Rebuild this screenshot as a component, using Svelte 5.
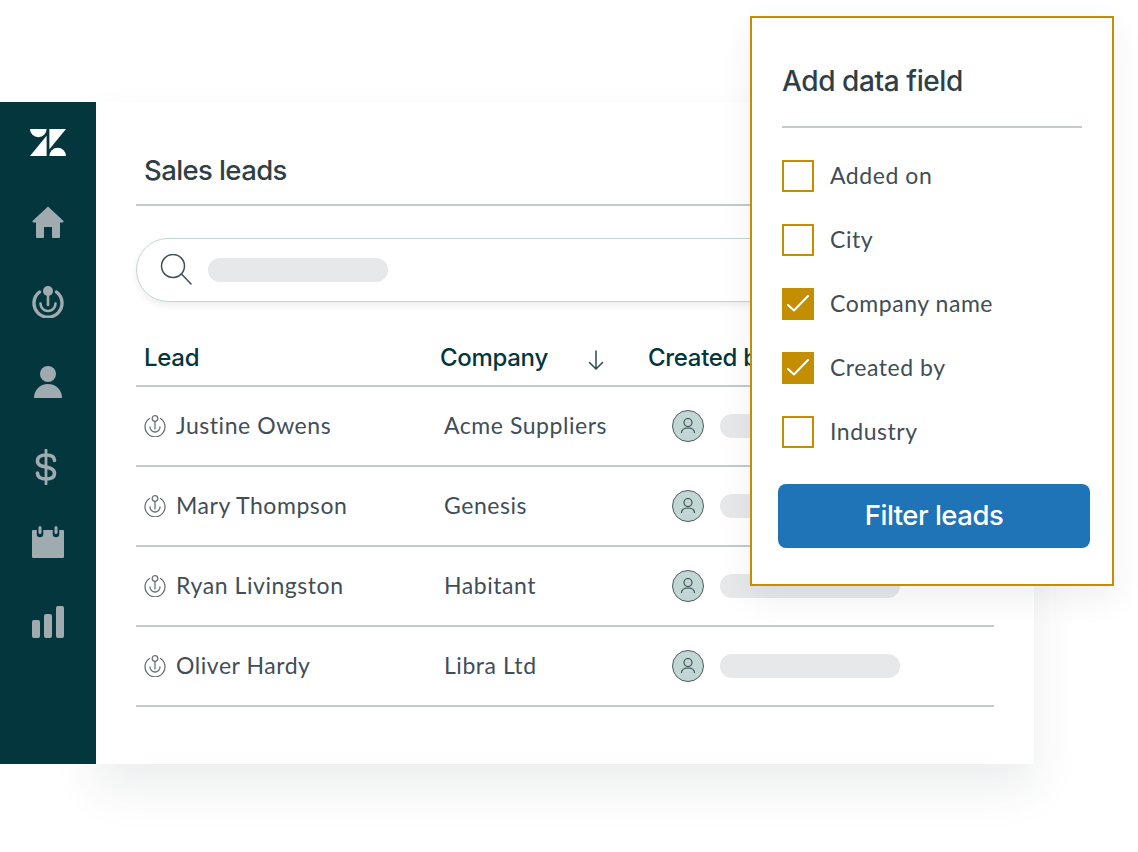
<script>
	const icons = ['logo', 'home', 'target', 'person', 'dollar', 'calendar', 'bars'];
	const leads = [
		{ name: 'Justine Owens', company: 'Acme Suppliers' },
		{ name: 'Mary Thompson', company: 'Genesis' },
		{ name: 'Ryan Livingston', company: 'Habitant' },
		{ name: 'Oliver Hardy', company: 'Libra Ltd' }
	];
	const fields = [
		{ label: 'Added on', checked: false },
		{ label: 'City', checked: false },
		{ label: 'Company name', checked: true },
		{ label: 'Created by', checked: true },
		{ label: 'Industry', checked: false }
	];
</script>

<div class="page">
	<div class="card">
		<nav class="sidebar">
			{#each icons as icon}
				<div class="nav-item">
					{#if icon === 'logo'}
						<svg width="36" height="27" viewBox="0 0 36 27" fill="#fff">
							<path d="M0 0h16.6a8.3 8.3 0 0 1-16.6 0z" />
							<path d="M16.6 6.8V27H0z" />
							<path d="M19.4 20.2V0H36z" />
							<path d="M19.4 27a8.3 8.3 0 0 1 16.6 0z" />
						</svg>
					{:else if icon === 'home'}
						<svg width="32" height="32" viewBox="0 0 32 32" fill="#a0abb0">
							<path d="M16 0.5 L31.5 15 Q32 16.5 30.5 16.5 H28 V31 Q28 32 27 32 H21 Q20 32 20 31 V21 H12 V31 Q12 32 11 32 H5 Q4 32 4 31 V16.5 H1.5 Q0 16.5 0.5 15 Z" />
						</svg>
					{:else if icon === 'target'}
						<svg width="32" height="32" viewBox="0 0 32 32" fill="none" stroke="#a0abb0" stroke-linecap="round">
							<circle cx="16" cy="5" r="5" fill="#a0abb0" stroke="none" />
							<path d="M16 8V19" stroke-width="2.6" />
							<path d="M7.500 6A14 14 0 1 0 24.500 6" stroke-width="3.400" />
							<path d="M8.500 17.500A7.500 7.500 0 0 0 23.500 17.500" stroke-width="2.600" />
						</svg>
					{:else if icon === 'person'}
						<svg width="32" height="32" viewBox="0 0 32 32" fill="#a0abb0">
							<circle cx="16" cy="8" r="8" />
							<path d="M2 32C2 24 8 18 16 18S30 24 30 32Z" />
						</svg>
					{:else if icon === 'dollar'}
						<svg class="dollar" width="24" height="36" viewBox="0 0 24 36" fill="none" stroke="#a0abb0" stroke-linecap="round">
							<path d="M12 1V35" stroke-width="2.800" />
							<path d="M20.500 11.500C20.500 7.500 17 6 12 6S3.500 8 3.500 12C3.500 16.500 7.500 17 12 18S20.500 20 20.500 24.500C20.500 28.500 17 30 12 30S3.500 28 3.500 24" stroke-width="3.600" />
						</svg>
					{:else if icon === 'calendar'}
						<svg width="32" height="32" viewBox="0 0 32 32">
							<path d="M1 4H31Q32 4 32 5V31Q32 32 31 32H1Q0 32 0 31V5Q0 4 1 4Z" fill="#a0abb0" />
							<path d="M8 1.500V8M24 1.500V8" stroke="#03363d" stroke-width="6.500" stroke-linecap="round" />
							<path d="M8 1.500V6.500M24 1.500V6.500" stroke="#a0abb0" stroke-width="3" stroke-linecap="round" />
						</svg>
					{:else}
						<svg width="32" height="32" viewBox="0 0 32 32" fill="#a0abb0">
							<rect x="0" y="14" width="8" height="18" rx="2" />
							<rect x="12" y="8" width="8" height="24" rx="2" />
							<rect x="24" y="0" width="8" height="32" rx="2" />
						</svg>
					{/if}
				</div>
			{/each}
		</nav>

		<main class="content">
			<h1>Sales leads</h1>

			<div class="search">
				<svg width="32" height="32" viewBox="0 0 32 32" fill="none" stroke="#3f4f56" stroke-width="1.500" stroke-linecap="round">
					<circle cx="13" cy="12" r="11.500" />
					<path d="M21.500 20L31 30" />
				</svg>
				<span class="bar search-bar"></span>
			</div>

			<div class="table-head">
				<span>Lead</span>
				<span class="company-head">
					Company
					<svg width="16" height="20" viewBox="0 0 16 20" fill="none" stroke="#2f4a50" stroke-width="1.500" stroke-linecap="round" stroke-linejoin="round">
						<path d="M8 1V19M1.500 12.500L8 19L14.500 12.500" />
					</svg>
				</span>
				<span>Created by</span>
			</div>

			{#each leads as lead}
				<div class="row">
					<span class="lead">
						<svg width="22" height="22" viewBox="0 0 22 22" fill="none" stroke="#66757c" stroke-width="1.300" stroke-linecap="round">
							<circle cx="11" cy="3.500" r="2.800" />
							<path d="M11 6.500V14" />
							<path d="M5.500 3.500A10 10 0 1 0 16.500 3.500" />
							<path d="M6 12A5 5 0 0 0 16 12" />
						</svg>
						<span class="label">{lead.name}</span>
					</span>
					<span class="label">{lead.company}</span>
					<span class="owner">
						<svg width="32" height="32" viewBox="0 0 32 32">
							<circle cx="16" cy="16" r="15.500" fill="#c2d6d4" stroke="#49605f" />
							<g fill="none" stroke="#2f4a50" stroke-width="1.100">
								<circle cx="16" cy="12.500" r="4" />
								<path d="M9.500 23C9.500 19.500 12.500 18 16 18S22.500 19.500 22.500 23" />
							</g>
						</svg>
						<span class="bar owner-bar"></span>
					</span>
				</div>
			{/each}
		</main>
	</div>

	<aside class="popup">
		<h2>Add data field</h2>
		<ul>
			{#each fields as field}
				<li>
					<span class="check" class:checked={field.checked}>
						{#if field.checked}
							<svg width="22" height="18" viewBox="0 0 22 18" fill="none" stroke="#fff" stroke-width="2" stroke-linecap="round" stroke-linejoin="round">
								<path d="M1 10L7 15.500L21 1" />
							</svg>
						{/if}
					</span>
					<span class="label">{field.label}</span>
				</li>
			{/each}
		</ul>
		<button>Filter leads</button>
	</aside>
</div>

<style>
	:global(body) {
		background: #fff;
	}

	.page {
		position: relative;
		width: 1138px;
		height: 852px;
		padding-top: 102px;
		box-sizing: border-box;
		overflow: hidden;
		font-family: 'Lato', sans-serif;
		color: #3f4e58;
	}

	.card {
		display: flex;
		width: 1034px;
		height: 662px;
	}

	.sidebar {
		width: 96px;
		flex-shrink: 0;
		background: #03363d;
		position: relative;
	}

	.nav-item {
		height: 80px;
		display: flex;
		align-items: center;
		justify-content: center;
	}

	.dollar {
		margin: 10px 4px 0 0;
	}

	.content {
		flex: 1;
		padding: 0 40px;
		background: #fff;
		box-shadow: 0 24px 44px rgba(47, 57, 65, 0.09);
	}

	h1 {
		margin: 0;
		height: 104px;
		padding-top: 50px;
		padding-left: 8px;
		box-sizing: border-box;
		border-bottom: 2px solid #c4c9cc;
		font-family: 'Inter', sans-serif;
		font-size: 27.500px;
		font-weight: 500;
		line-height: 36px;
		letter-spacing: -0.6px;
		color: #2f3f47;
	}

	.search {
		display: flex;
		align-items: center;
		gap: 16px;
		height: 64px;
		margin-top: 32px;
		padding-left: 23px;
		box-sizing: border-box;
		border: 1px solid #c3d6d3;
		border-radius: 32px;
		box-shadow: 0 4px 6px rgba(47, 57, 65, 0.08);
	}

	.bar {
		display: block;
		height: 24px;
		border-radius: 12px;
		background: #e6e8ea;
	}

	.search-bar {
		width: 180px;
	}

	.table-head {
		display: grid;
		grid-template-columns: 296px 208px 1fr;
		align-items: center;
		height: 85px;
		padding: 28px 8px 0;
		box-sizing: border-box;
		border-bottom: 2px solid #c4c9cc;
		font-family: 'Inter', sans-serif;
		font-size: 24px;
		font-weight: 500;
		letter-spacing: -0.3px;
		color: #03363d;
		white-space: nowrap;
	}

	.company-head {
		display: flex;
		align-items: center;
		gap: 40px;
	}

	.company-head svg {
		margin-top: 4px;
	}

	.row {
		display: grid;
		grid-template-columns: 300px 228px 1fr;
		align-items: center;
		height: 80px;
		padding-left: 8px;
		box-sizing: border-box;
		border-bottom: 2px solid #c4c9cc;
		font-size: 23px;
		letter-spacing: 0.55px;
	}

	.label {
		margin-top: -2px;
	}

	.lead,
	.owner {
		display: flex;
		align-items: center;
	}

	.lead {
		gap: 10px;
	}

	.owner {
		gap: 16px;
	}

	.owner-bar {
		width: 180px;
	}

	.popup {
		position: absolute;
		left: 750px;
		top: 16px;
		width: 364px;
		height: 570px;
		padding: 0 30px;
		box-sizing: border-box;
		background: #fff;
		border: 2px solid #c38f00;
		box-shadow: 0 12px 30px rgba(47, 57, 65, 0.08);
	}

	h2 {
		margin: 0;
		height: 110px;
		padding-top: 45px;
		box-sizing: border-box;
		border-bottom: 2px solid #c4c9cc;
		font-family: 'Inter', sans-serif;
		font-size: 28px;
		font-weight: 500;
		line-height: 36px;
		letter-spacing: -0.4px;
		color: #2f3f47;
	}

	ul {
		list-style: none;
		margin: 0;
		padding: 16px 0 20px;
	}

	li {
		display: flex;
		align-items: center;
		gap: 16px;
		height: 64px;
		font-size: 23px;
		letter-spacing: 0.55px;
	}

	.check {
		display: flex;
		align-items: center;
		justify-content: center;
		width: 32px;
		height: 32px;
		box-sizing: border-box;
		border: 2px solid #c38f00;
	}

	.checked {
		background: #c38f00;
	}

	button {
		display: block;
		width: 312px;
		height: 64px;
		margin-left: -4px;
		padding-bottom: 4px;
		border: none;
		border-radius: 8px;
		background: #1f73b7;
		color: #fff;
		font-family: 'Inter', sans-serif;
		font-size: 27.500px;
		font-weight: 500;
		letter-spacing: -0.5px;
	}
</style>
